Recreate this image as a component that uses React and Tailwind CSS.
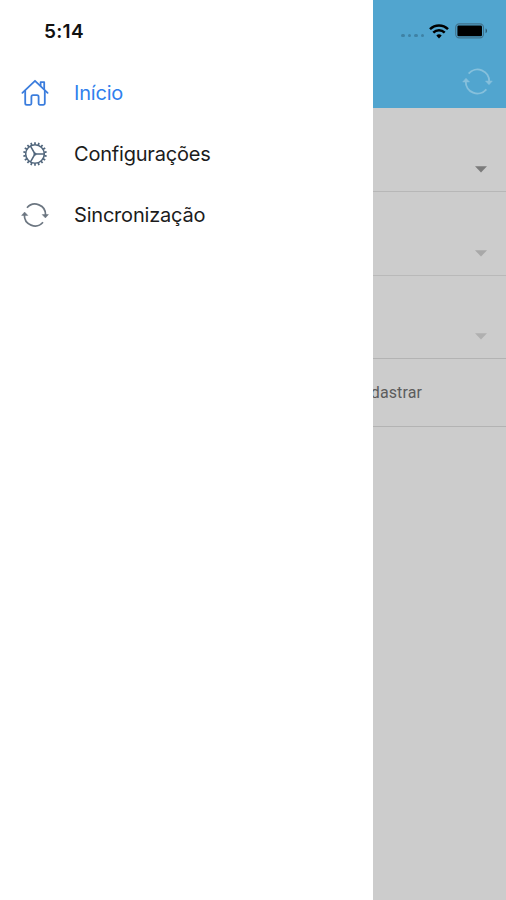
const HomeIcon = () => (
  <svg width="28" height="28" viewBox="0 0 28 28" fill="none" stroke="#3b7ddd" strokeWidth="1.8" strokeLinejoin="round" strokeLinecap="round">
    <path d="M1.4 13.8 14 1.8l12.6 12" />
    <path d="M4.2 11.6v12.6a1.6 1.6 0 0 0 1.6 1.6h3.4a1.2 1.2 0 0 0 1.2-1.2v-6.8a1.6 1.6 0 0 1 1.6-1.6h4a1.6 1.6 0 0 1 1.6 1.6v6.8a1.2 1.2 0 0 0 1.2 1.2h3.4a1.6 1.6 0 0 0 1.6-1.6V11.6" />
    <path d="M19.6 6.6V3.2h3.6v7" />
  </svg>
);

const teeth = Array.from({ length: 18 }, (_, i) => i * 20);

const GearIcon = () => (
  <svg width="28" height="28" viewBox="0 0 28 28" fill="none" stroke="#52677d" strokeWidth="1.5">
    <circle cx="14" cy="14" r="9.3" />
    {teeth.map((angle) => (
      <path key={angle} d="M14 4.7V2.2" strokeWidth="1.7" transform={`rotate(${angle} 14 14)`} />
    ))}
    <path d="M14 14h9.3M14 14 9.35 5.95M14 14 9.35 22.05" />
    <circle cx="14" cy="14" r="0.8" />
  </svg>
);

const SyncIcon = ({ size = 28, color = '#6c7681', strokeWidth = 1.7 }) => (
  <svg width={size} height={size} viewBox="0 0 28 28" fill="none" stroke={color} strokeWidth={strokeWidth}>
    <path d="M6 6.8a10.6 10.6 0 0 1 18.6 7.4" />
    <path d="M22 21.2A10.6 10.6 0 0 1 3.4 13.8" />
    <path d="M21.2 13.6h6.2l-3 3.3z" fill={color} strokeWidth="0.5" />
    <path d="M.6 14.4h6.2l-3.2-3.3z" fill={color} strokeWidth="0.5" />
  </svg>
);

const WifiIcon = () => (
  <svg width="20" height="15" viewBox="0 0 20 15" fill="none" stroke="#000" strokeWidth="2.5">
    <path d="M1 5.2a12.8 12.8 0 0 1 18 0" />
    <path d="M4.3 8.7a8.1 8.1 0 0 1 11.4 0" />
    <path d="M10 14.4 7.3 11.6a3.9 3.9 0 0 1 5.4 0z" fill="#000" stroke="none" />
  </svg>
);

const BatteryIcon = () => (
  <svg width="33" height="16" viewBox="0 0 33 16">
    <rect x="0.7" y="0.9" width="27.8" height="14" rx="3.6" fill="none" stroke="#41728c" strokeWidth="1.1" />
    <rect x="2.4" y="2.6" width="24.6" height="10.6" rx="1.2" fill="#000" />
    <path d="M30.6 5.6c1.8.7 1.8 4 0 4.7z" fill="#28526a" />
  </svg>
);

const Caret = ({ className }) => (
  <svg className={className} width="12" height="7" viewBox="0 0 12 7">
    <path d="M0 .3h12L6 6.6z" fill="currentColor" />
  </svg>
);

const menuItems = [
  { label: 'Início', icon: <HomeIcon />, className: 'text-[#2f80ed]' },
  { label: 'Configurações', icon: <GearIcon />, className: 'text-[#1c1c1c]' },
  { label: 'Sincronização', icon: <SyncIcon />, className: 'text-[#1c1c1c]' },
];

const App = () => {
  return (
    <div className="flex h-screen w-full overflow-hidden bg-white font-['Inter',sans-serif]">
      {/* Side menu */}
      <aside className="w-[373px] shrink-0 bg-white">
        <div className="h-[62px] pl-11 pt-5 text-[19px] leading-6 font-semibold tracking-[0.3px] text-[#111]">5:14</div>
        <nav>
          {menuItems.map((item) => (
            <a key={item.label} className={`flex h-[61.4px] items-center pl-[21px] text-xl ${item.className}`}>
              {item.icon}
              <span className="ml-[25px] tracking-[-0.2px]">{item.label}</span>
            </a>
          ))}
        </nav>
      </aside>

      {/* Dimmed page */}
      <main className="min-w-0 flex-1 overflow-hidden bg-[#cccccc]">
        <header className="flex h-[108px] flex-col items-end bg-[#51a5cf]">
          <div className="mt-[23px] flex h-4 items-center pr-[18px]">
            <div className="mt-[9px] mr-[5px] flex gap-[3px]">
              <span className="size-[3.5px] rounded-full bg-[#3f82a5]" />
              <span className="size-[3.5px] rounded-full bg-[#3f82a5]" />
              <span className="size-[3.5px] rounded-full bg-[#3f82a5]" />
              <span className="size-[3.5px] rounded-full bg-[#3f82a5]" />
            </div>
            <WifiIcon />
            <div className="ml-[6px]">
              <BatteryIcon />
            </div>
          </div>
          <div className="mt-[27px] pr-[13px]">
            <SyncIcon size={31} color="#86c0dc" strokeWidth={1.7} />
          </div>
        </header>
        <div className="flex h-[83.5px] items-end justify-end border-b border-[#b7b7b7] pr-[19px] pb-[18px]">
          <Caret className="text-[#7b7b7b]" />
        </div>
        <div className="flex h-[84.5px] items-end justify-end border-b border-[#b9b9b9] pr-[19px] pb-[18px]">
          <Caret className="text-[#a8a8a8]" />
        </div>
        <div className="flex h-[82.5px] items-end justify-end border-b border-[#b3b3b3] pr-[19px] pb-[18px]">
          <Caret className="text-[#b0b0b0]" />
        </div>
        <div className="flex h-[68.5px] items-center justify-end border-b border-[#b3b3b3] pt-0.5 pr-[84px] font-['Roboto',sans-serif] text-base tracking-[0.1px] text-[#5c5c5c]">
          Cadastrar
        </div>
      </main>
    </div>
  );
};

export default App;
